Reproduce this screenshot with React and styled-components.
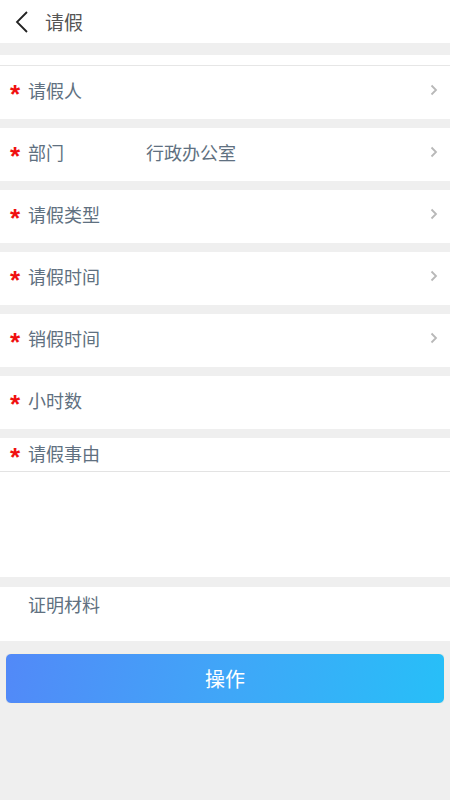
import React from 'react';
import styled, { createGlobalStyle } from 'styled-components';

const GlobalStyle = createGlobalStyle`
  *, *::before, *::after {
    box-sizing: border-box;
  }
  html, body {
    margin: 0;
    padding: 0;
    background: #efefef;
    font-family: "Noto Sans CJK SC", "Noto Sans", sans-serif;
  }
`;

const Page = styled.div`
  width: 450px;
  min-height: 800px;
  background: #efefef;
`;

const Header = styled.div`
  height: 43px;
  background: #fff;
  display: flex;
  align-items: center;
  padding-left: 14px;
  gap: 15px;
`;

const Title = styled.div`
  font-size: 19px;
  color: #555;
`;

const Spacer = styled.div`
  height: 11px;
  margin-top: 12px;
  background: #fff;
  border-bottom: 1px solid #e6e6e6;
`;

const Row = styled.div`
  background: #fff;
  height: ${p => p.h || 53}px;
  margin-bottom: ${p => (p.last ? 0 : 9)}px;
  display: flex;
  align-items: ${p => (p.top ? 'flex-start' : 'center')};
  padding: ${p => (p.top ? '4px 12px 0 10px' : `0 12px ${p.line ? 3 : 6}px 10px`)};
  border-bottom: ${p => (p.line ? '1px solid #e3e3e3' : 'none')};
`;

const Star = styled.span`
  width: 18px;
  color: #f01010;
  font-size: 26px;
  font-weight: bold;
  line-height: 1;
  padding-top: 8px;
  font-family: "Liberation Sans", sans-serif;
`;

const Label = styled.span`
  font-size: 18px;
  color: #607080;
  width: 118px;
`;

const Value = styled.span`
  flex: 1;
  font-size: 18px;
  color: #607080;
`;

const Area = styled.div`
  height: 105px;
  background: #fff;
  margin-bottom: 10px;
`;

const Button = styled.button`
  display: block;
  width: 440px;
  height: 51px;
  margin: 12px 5px 0;
  border: 1px solid #f3efe3;
  border-radius: 6px;
  background: linear-gradient(100deg, #5289f8 0%, #40a6f8 50%, #27bff8 100%);
  color: #fff;
  font-size: 20px;
  font-family: "Noto Sans CJK SC", sans-serif;
`;

const Chevron = () => (
  <svg width="8" height="12" viewBox="0 0 8 12">
    <path d="M1.5 1.5 L6 6 L1.5 10.5" fill="none" stroke="#b8b8b8" strokeWidth="1.8" />
  </svg>
);

const Back = () => (
  <svg width="16" height="24" viewBox="0 0 16 24">
    <path d="M13 2 L3 12 L13 22" fill="none" stroke="#222" strokeWidth="1.8" />
  </svg>
);

const fields = [
  { label: '请假人', arrow: true },
  { label: '部门', value: '行政办公室', arrow: true },
  { label: '请假类型', arrow: true },
  { label: '请假时间', arrow: true },
  { label: '销假时间', arrow: true },
  { label: '小时数' }
];

export default function App() {
  return (
    <Page>
      <GlobalStyle />
      <Header>
        <Back />
        <Title>请假</Title>
      </Header>
      <Spacer />
      {fields.map(f => (
        <Row key={f.label}>
          <Star>*</Star>
          <Label>{f.label}</Label>
          <Value>{f.value}</Value>
          {f.arrow && <Chevron />}
        </Row>
      ))}
      <Row h={34} line last>
        <Star>*</Star>
        <Label>请假事由</Label>
      </Row>
      <Area />
      <Row h={54} top last>
        <Star />
        <Label>证明材料</Label>
      </Row>
      <Button>操作</Button>
    </Page>
  );
}
